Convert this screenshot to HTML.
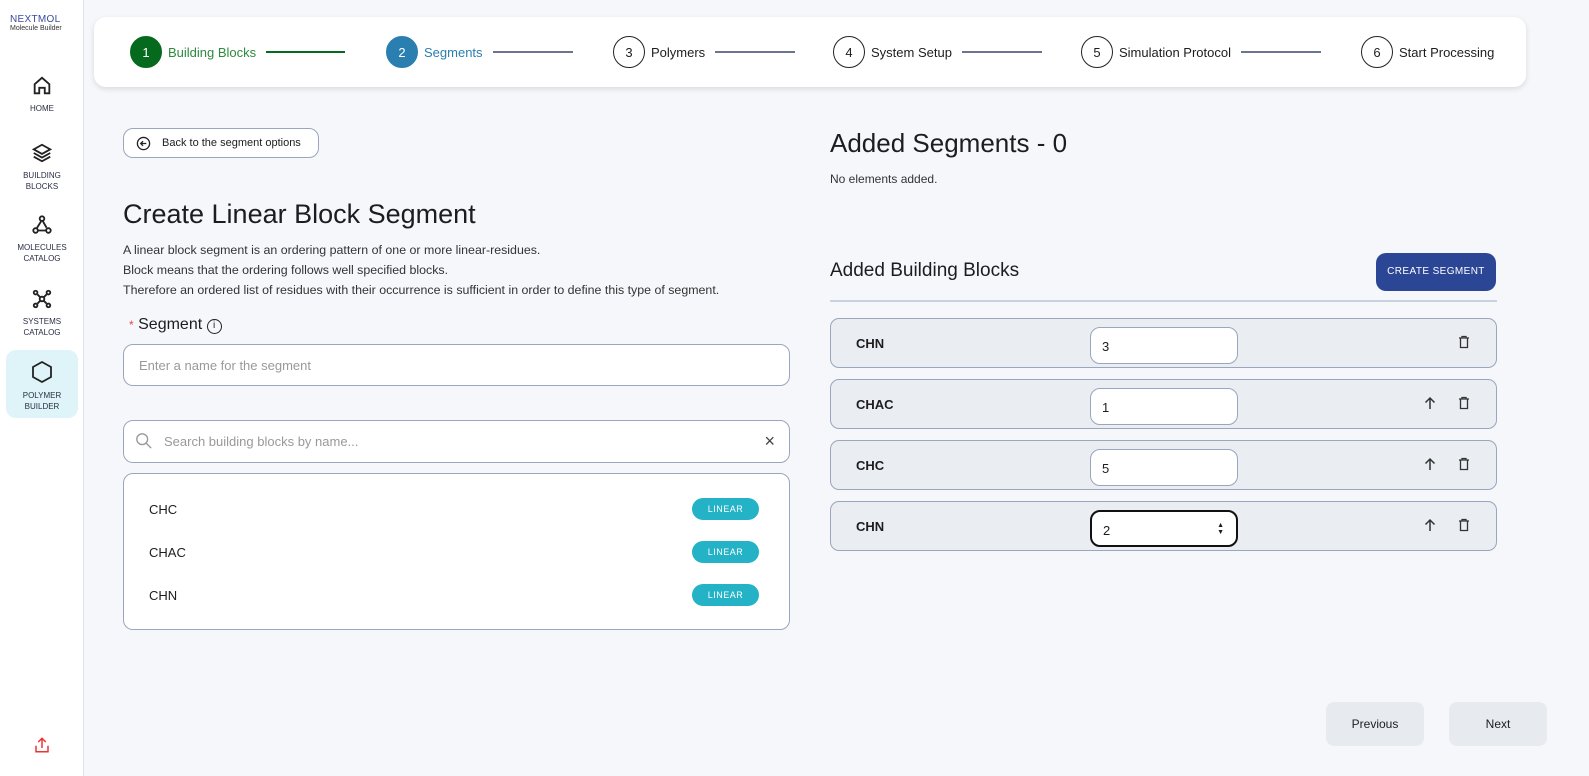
<!DOCTYPE html>
<html><head><meta charset="utf-8"><style>
*{box-sizing:border-box;margin:0;padding:0}
body{width:1589px;height:776px;background:#f5f7fb;font-family:"Liberation Sans",sans-serif;color:#1d1d1f;position:relative;overflow:hidden}
.abs{position:absolute}
.side{left:0;top:0;width:84px;height:776px;background:#fff;border-right:1px solid #dde1ea}
.nav{position:absolute;left:6px;width:72px;text-align:center;font-size:8px;line-height:11px;color:#2a2d45}
.nav svg{display:block;margin:0 auto 6px}
.top{left:94px;top:17px;width:1432px;height:70px;background:#fff;border-radius:12px;box-shadow:0 2px 6px rgba(0,0,0,.12)}
.st{position:absolute;top:19px;display:flex;align-items:center;font-size:13px}
.c{width:32px;height:32px;border-radius:50%;border:1px solid #222;display:flex;align-items:center;justify-content:center;font-size:13px;margin-right:6px;background:#fff}
.ln{height:2px;background:#6b7590;margin-left:10px;width:80px}
.box{background:#fff;border:1px solid #9aa6bd;border-radius:10px}
.row{position:absolute;left:830px;width:667px;height:50px;background:#eaedf2;border:1px solid #9aa6bd;border-radius:9px}
.row b{position:absolute;left:25px;top:17px;font-size:13px}
.row .in{position:absolute;left:259px;top:8px;width:148px;height:37px;background:#fff;border:1px solid #9aa6bd;border-radius:10px;font-size:13px;padding:11px 0 0 11px}
.tag{position:absolute;right:30px;width:67px;height:22px;border-radius:11px;background:#24b3c6;color:#fff;font-size:9px;text-align:center;line-height:22px;letter-spacing:.5px}
.it{position:absolute;left:25px;font-size:13px}
.ic{position:absolute;top:16px}
</style></head><body>
<div class="abs side">
 <div class="abs" style="left:10px;top:14px;font-size:10px;color:#3a4a9a;letter-spacing:.3px">NEXTMOL</div>
 <div class="abs" style="left:10px;top:25px;font-size:7px;color:#333">Molecule Builder</div>
 <div class="nav" style="top:75px"><svg width="22" height="22" viewBox="0 0 24 24" fill="none" stroke="#222" stroke-width="2"><path d="M4 10l8-7 8 7v10h-5v-6H9v6H4z"/></svg>HOME</div>
 <div class="nav" style="top:142px"><svg width="22" height="22" viewBox="0 0 24 24" fill="none" stroke="#222" stroke-width="2"><path d="M12 3l9 5-9 5-9-5z M3 12l9 5 9-5 M3 16l9 5 9-5"/></svg>BUILDING<br>BLOCKS</div>
 <div class="nav" style="top:214px"><svg width="22" height="22" viewBox="0 0 24 24" fill="none" stroke="#222" stroke-width="2"><circle cx="12" cy="5" r="2.5"/><circle cx="5" cy="18" r="2.5"/><circle cx="19" cy="18" r="2.5"/><path d="M11 8l-5 8M8 18h9M13 8l4 7"/></svg>MOLECULES<br>CATALOG</div>
 <div class="nav" style="top:288px"><svg width="22" height="22" viewBox="0 0 24 24" fill="none" stroke="#222" stroke-width="2"><circle cx="12" cy="12" r="2.5"/><circle cx="5" cy="5" r="2"/><circle cx="19" cy="5" r="2"/><circle cx="5" cy="19" r="2"/><circle cx="19" cy="19" r="2"/><path d="M7 7l3 3M17 7l-3 3M7 17l3-3M17 17l-3-3"/></svg>SYSTEMS<br>CATALOG</div>
 <div class="nav" style="top:350px;height:68px;background:#def4f8;border-radius:10px;padding-top:10px"><svg width="24" height="24" viewBox="0 0 24 24" fill="none" stroke="#222" stroke-width="1.8"><path d="M12 2l9 5v10l-9 5-9-5V7z"/></svg>POLYMER<br>BUILDER</div>
 <svg class="abs" style="left:33px;top:736px" width="18" height="18" viewBox="0 0 24 24" fill="none" stroke="#e33" stroke-width="2"><path d="M4 13v8h16v-8M12 16V3M7 8l5-5 5 5"/></svg>
</div>
<div class="abs top">
 <div class="st" style="left:36px"><div class="c" style="background:#056a1e;border-color:#056a1e;color:#fff">1</div><span style="color:#2d8a3e">Building Blocks</span><div class="ln" style="background:#056a1e;width:79px">&nbsp;</div></div>
 <div class="st" style="left:292px"><div class="c" style="background:#2a7fb0;border-color:#2a7fb0;color:#fff">2</div><span style="color:#2a7fb0">Segments</span><div class="ln"></div></div>
 <div class="st" style="left:519px"><div class="c">3</div>Polymers<div class="ln"></div></div>
 <div class="st" style="left:739px"><div class="c">4</div>System Setup<div class="ln"></div></div>
 <div class="st" style="left:987px"><div class="c">5</div>Simulation Protocol<div class="ln"></div></div>
 <div class="st" style="left:1267px"><div class="c">6</div>Start Processing</div>
</div>
<div class="abs box" style="left:123px;top:128px;width:196px;height:30px;border-radius:10px;font-size:11px;padding:8px 0 0 38px">Back to the segment options
 <svg class="abs" style="left:12px;top:7px" width="15" height="15" viewBox="0 0 16 16" fill="none" stroke="#222" stroke-width="1.4"><circle cx="8" cy="8" r="6.5"/><path d="M11 8H5M7.5 5.5L5 8l2.5 2.5"/></svg></div>
<div class="abs" style="left:123px;top:199px;font-size:27px">Create Linear Block Segment</div>
<div class="abs" style="left:123px;top:240px;font-size:12.4px;line-height:20px;color:#333">A linear block segment is an ordering pattern of one or more linear-residues.<br>Block means that the ordering follows well specified blocks.<br>Therefore an ordered list of residues with their occurrence is sufficient in order to define this type of segment.</div>
<div class="abs" style="left:129px;top:316px;font-size:16px"><span style="color:#e44;font-size:12px">*</span> Segment <span style="display:inline-block;width:15px;height:15px;border:1.4px solid #222;border-radius:50%;font-size:10px;text-align:center;line-height:12px;vertical-align:1px">i</span></div>
<div class="abs box" style="left:123px;top:344px;width:667px;height:42px;font-size:13px;color:#999;padding:13px 0 0 15px">Enter a name for the segment</div>
<div class="abs box" style="left:123px;top:420px;width:667px;height:43px;font-size:13px;color:#999;padding:13px 0 0 40px">Search building blocks by name...
 <svg class="abs" style="left:11px;top:11px" width="18" height="18" viewBox="0 0 20 20" fill="none" stroke="#999" stroke-width="1.5"><circle cx="8" cy="8" r="6"/><path d="M12.5 12.5L18 18"/></svg>
 <span class="abs" style="right:14px;top:10px;font-size:18px;color:#444">×</span></div>
<div class="abs box" style="left:123px;top:473px;width:667px;height:157px">
 <div class="it" style="top:28px">CHC</div><div class="tag" style="top:24px">LINEAR</div>
 <div class="it" style="top:71px">CHAC</div><div class="tag" style="top:67px">LINEAR</div>
 <div class="it" style="top:114px">CHN</div><div class="tag" style="top:110px">LINEAR</div>
</div>
<div class="abs" style="left:830px;top:128px;font-size:26px">Added Segments - 0</div>
<div class="abs" style="left:830px;top:172px;font-size:12px;color:#333">No elements added.</div>
<div class="abs" style="left:830px;top:260px;font-size:19px">Added Building Blocks</div>
<div class="abs" style="left:1376px;top:253px;width:120px;height:38px;background:#2c4696;border-radius:10px;color:#fff;font-size:10px;text-align:center;line-height:38px;letter-spacing:.4px">CREATE SEGMENT</div>
<div class="abs" style="left:830px;top:300px;width:667px;height:2px;background:#c9d2e0"></div>
<svg width="0" height="0" style="position:absolute"><defs>
<symbol id="tr" viewBox="0 0 14 14"><path d="M2 3h10M5 3V1.5h4V3M3.5 3v9.5h7V3" fill="none" stroke="#333" stroke-width="1.3"/></symbol>
<symbol id="up" viewBox="0 0 14 14"><path d="M7 13V2M2.5 6.5L7 2l4.5 4.5" fill="none" stroke="#333" stroke-width="1.5"/></symbol>
</defs></svg>
<div class="row" style="top:318px"><b>CHN</b><div class="in">3</div><svg class="ic" style="left:626px" width="14" height="14"><use href="#tr"/></svg></div>
<div class="row" style="top:379px"><b>CHAC</b><div class="in">1</div><svg class="ic" style="left:592px" width="14" height="14"><use href="#up"/></svg><svg class="ic" style="left:626px" width="14" height="14"><use href="#tr"/></svg></div>
<div class="row" style="top:440px"><b>CHC</b><div class="in">5</div><svg class="ic" style="left:592px" width="14" height="14"><use href="#up"/></svg><svg class="ic" style="left:626px" width="14" height="14"><use href="#tr"/></svg></div>
<div class="row" style="top:501px"><b>CHN</b><div class="in" style="border:2px solid #111">2<span class="abs" style="right:12px;top:10px;font-size:7px;line-height:7px">▲<br>▼</span></div><svg class="ic" style="left:592px" width="14" height="14"><use href="#up"/></svg><svg class="ic" style="left:626px" width="14" height="14"><use href="#tr"/></svg></div>
<div class="abs" style="left:1326px;top:702px;width:98px;height:44px;background:#e7eaef;border-radius:8px;font-size:12px;text-align:center;line-height:44px">Previous</div>
<div class="abs" style="left:1449px;top:702px;width:98px;height:44px;background:#e7eaef;border-radius:8px;font-size:12px;text-align:center;line-height:44px">Next</div>
</body></html>
